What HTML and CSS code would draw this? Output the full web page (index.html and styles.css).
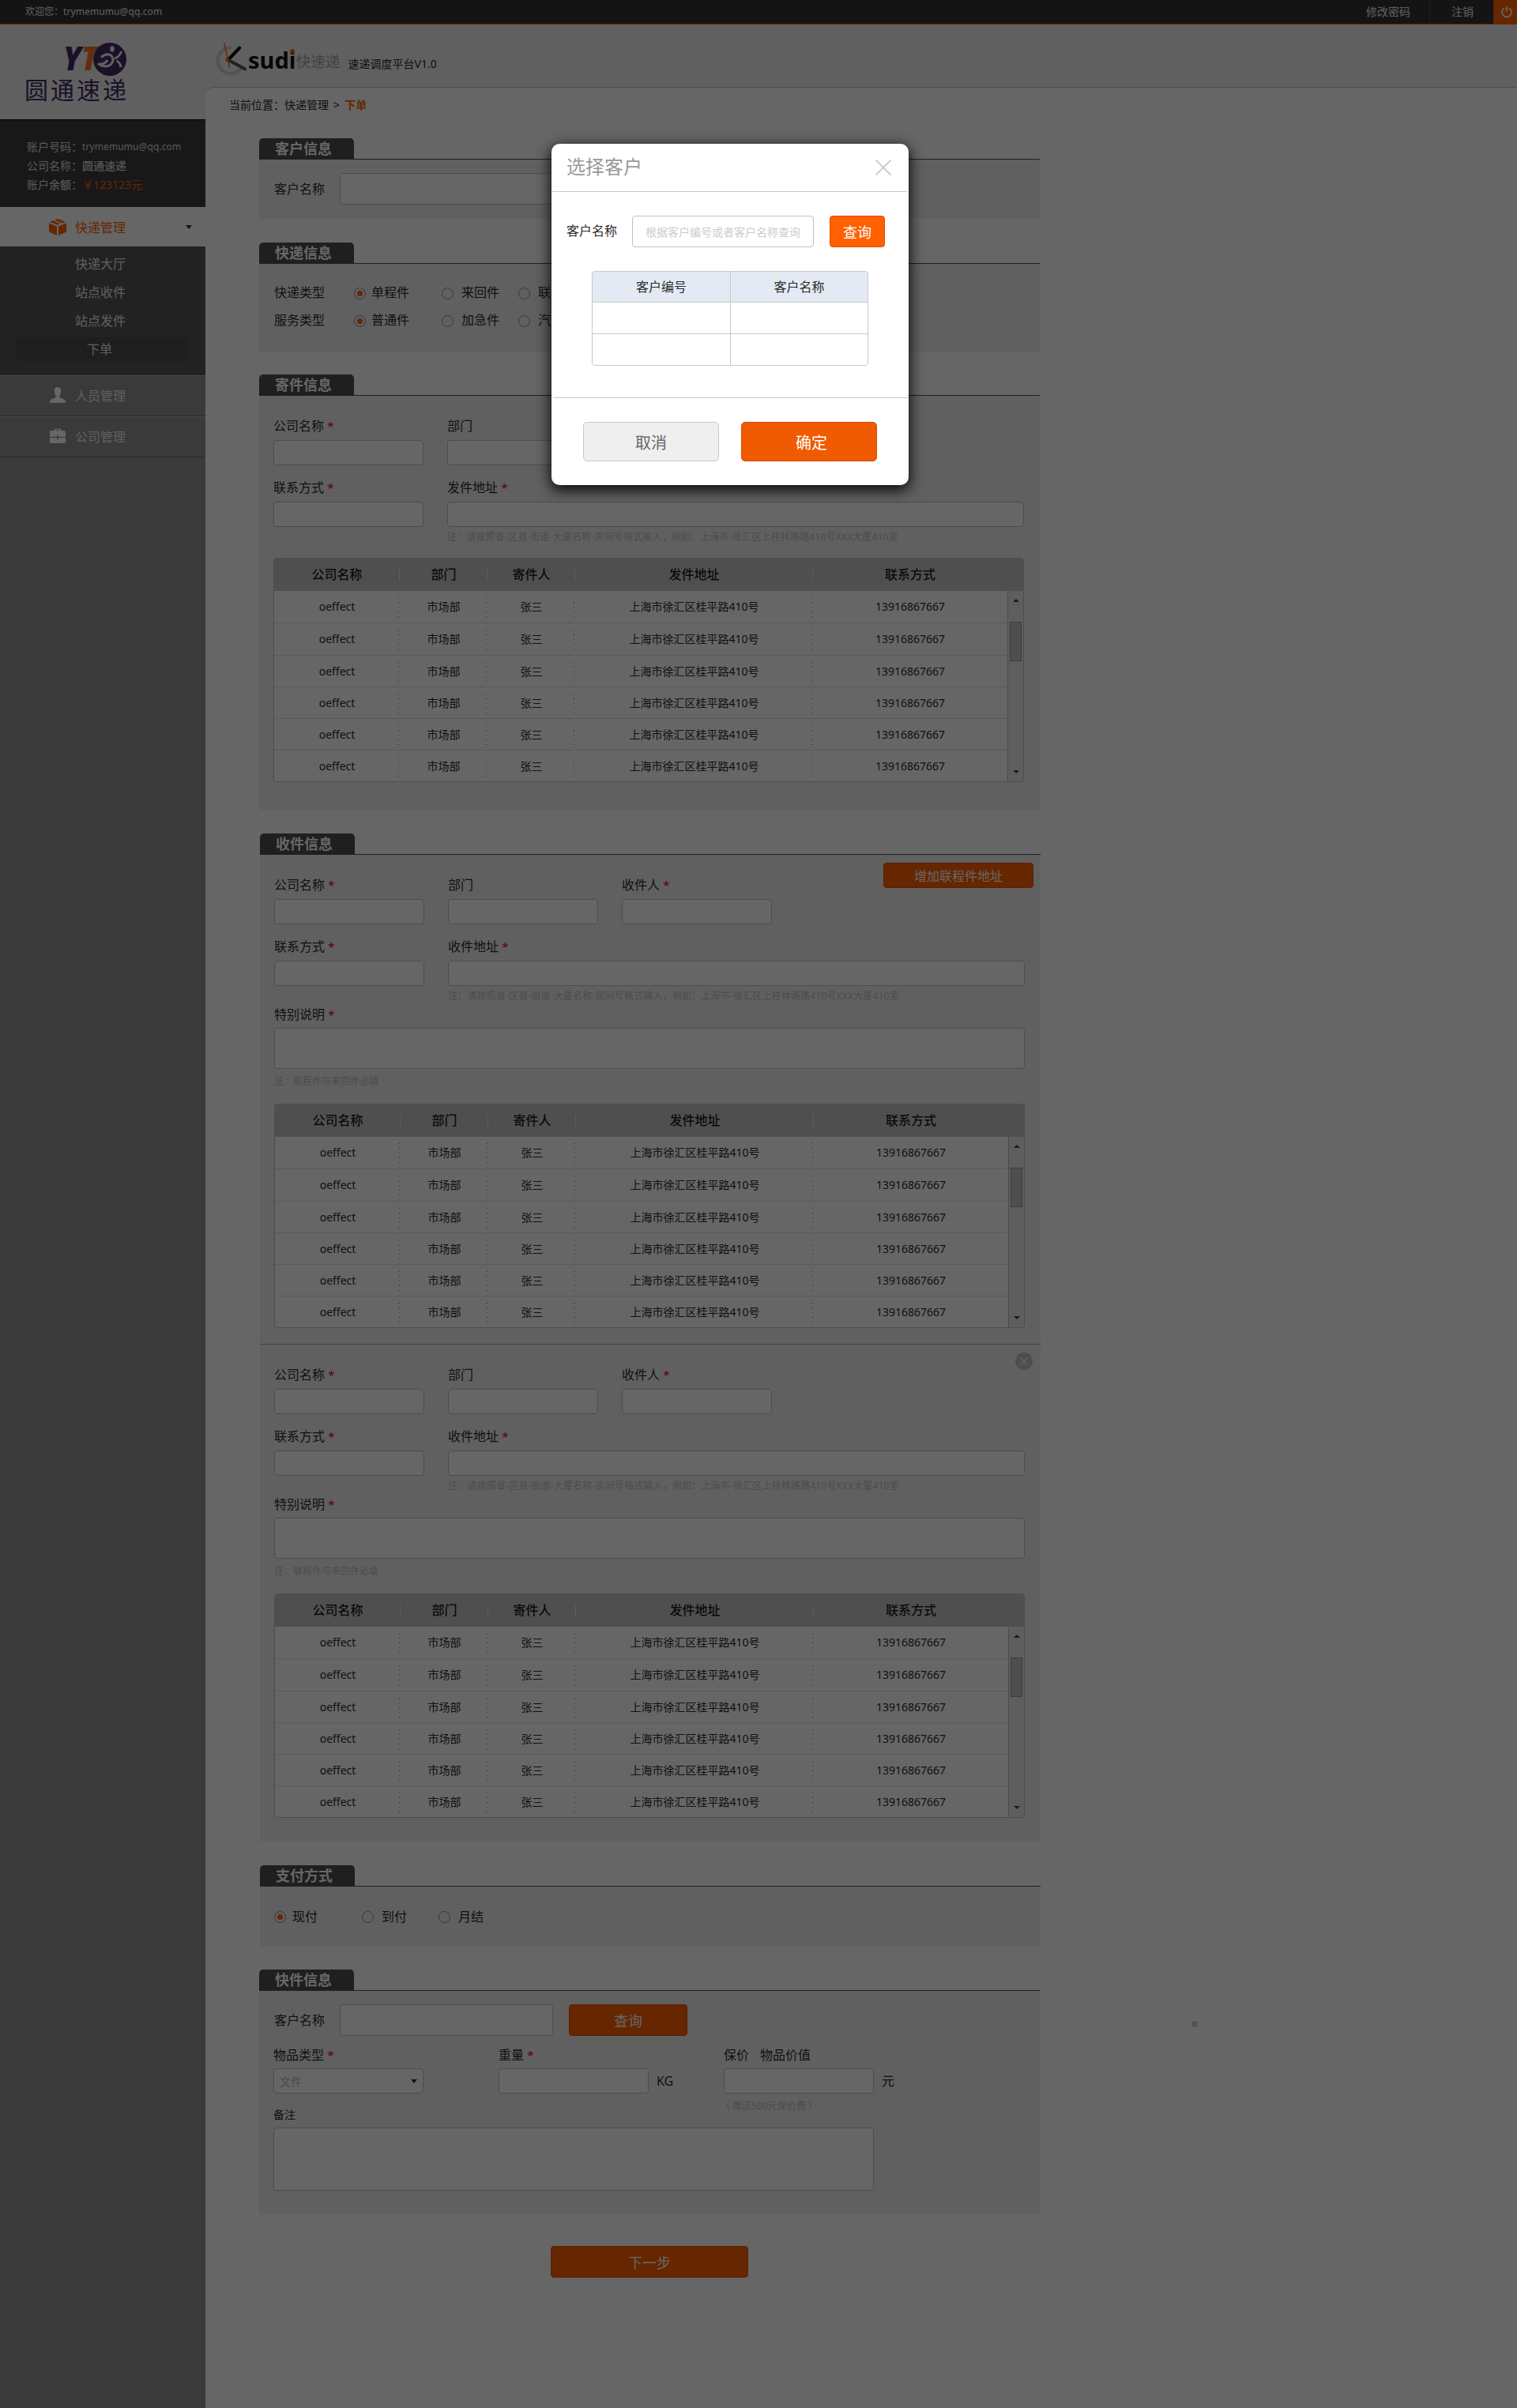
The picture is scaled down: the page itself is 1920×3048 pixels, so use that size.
FILE: index.html
```html
<!DOCTYPE html>
<html lang="zh-CN">
<head>
<meta charset="utf-8">
<title>速递调度平台V1.0</title>
<link rel="stylesheet" href="styles.css">
</head>
<body>
<div class="page">
  <header class="topbar">
    <div class="welcome"><span>欢迎您<span class="pt">：</span></span><span class="mail">trymemumu@qq.com</span></div>
    <nav class="topnav">
      <a class="topnav-link">修改密码</a>
      <a class="topnav-link logout">注销</a>
      <a class="power"><svg width="16" height="16" viewBox="0 0 16 16"><path d="M5.2 3.2A6 6 0 1 0 10.8 3.2M8 .8v7" fill="none" stroke="#fff" stroke-width="1.8"/></svg></a>
    </nav>
  </header>

  <div class="layout">
    <aside class="sidebar">
      <div class="company-logo">
        <svg class="yto" width="90" height="44" viewBox="0 0 90 44">
          <text class="yto-text" x="5" y="36" textLength="44" lengthAdjust="spacingAndGlyphs">Y<tspan fill="#f2702a">T</tspan></text>
          <circle cx="64" cy="22" r="21" fill="#432b64"/>
          <ellipse cx="67" cy="9" rx="2.800" ry="3.700" fill="#f0f0f0"/>
          <path d="M53 19.500Q60 13.500 66 17.500Q71 24 64 29.500Q58 33 49 28Q58 29 61 23" fill="none" stroke="#f0f0f0" stroke-width="3"/>
          <path d="M78.500 12Q77 18 70 21.500M72.500 24Q77 26 78 32" fill="none" stroke="#f0f0f0" stroke-width="3"/>
        </svg>
        <div class="company-name">圆通速递</div>
      </div>
      <div class="account">
        <div class="account-row"><span>账户号码<span class="pt">：</span></span><span class="mail">trymemumu@qq.com</span></div>
        <div class="account-row"><span>公司名称<span class="pt">：</span></span><b>圆通速递</b></div>
        <div class="account-row"><span>账户<b>余额</b><span class="pt">：</span></span><span class="balance">￥123123元</span></div>
      </div>
      <div class="menu-item active">
        <svg width="22" height="21" viewBox="0 0 22 21"><path d="M0 5.5L10 9.500V21L0 16.500zM22 5.500L12 9.500V21L22 16.500zM1 4L5 2.300L14 6L11 7.800zM7 1.500L11 0L21 4L16.500 5.500z" fill="#ff5f00"/></svg>
        <span>快递管理</span>
        <i class="caret"></i>
      </div>
      <ul class="submenu">
        <li>快递大厅</li>
        <li>站点收件</li>
        <li>站点发件</li>
        <li class="current">下单</li>
      </ul>
      <div class="menu-item">
        <svg width="22" height="20" viewBox="0 0 22 20"><path d="M11 0c3 0 4.300 2.300 4.300 5.300c0 3-1.600 4.600-2 6.700c0 2.500 7 2.300 7.700 5.500V20H1v-2.500c.7-3.200 7.700-3 7.700-5.500C8.300 9.900 6.700 8.300 6.700 5.300C6.700 2.300 8 0 11 0z" fill="#fff"/></svg>
        <span>人员管理</span>
      </div>
      <div class="menu-item">
        <svg width="22" height="20" viewBox="0 0 22 20"><path d="M7 3V.8h8V3h4q2 0 2 2v6H12V9.500h-2V11H1V5q0-2 2-2zM9 3h4V2H9zM1 12h9v2h2v-2h9v6q0 1-1 1H2q-1 0-1-1z" fill="#fff"/></svg>
        <span>公司管理</span>
      </div>
    </aside>

    <main class="main">
      <div class="brand">
        <svg width="46" height="46" viewBox="0 0 46 46">
          <path d="M22.500 7.200A16.400 16.400 0 1 0 36 33.500" fill="none" stroke="#cfcfcf" stroke-width="4.500" stroke-linecap="round"/>
          <path d="M20 22.500L34.300 7.500" stroke="#111" stroke-width="4" stroke-linecap="round"/>
          <path d="M20 23L41 34.300" stroke="#555" stroke-width="4" stroke-linecap="round"/>
          <path d="M14.700 1.300L21.700 32.700" stroke="#ff5f00" stroke-width="1.500"/>
          <circle cx="19" cy="22.700" r="2.500" fill="#ff5f00"/>
        </svg>
        <span class="brand-latin">sudi</span>
        <span class="brand-cn">快速递</span>
        <span class="brand-sub">速递调度平台V1.0</span>
      </div>
      <div class="content">
        <div class="crumb">当前位置<span class="pt">：</span>快递管理 <span class="gt">&gt;</span> <b>下单</b></div>

        <section class="section customer">
          <div class="section-head"><h2>客户信息</h2></div>
          <div class="panel query">
            <label>客户名称</label><input type="text"><button class="btn">查询</button>
          </div>
        </section>

        <section class="section express">
          <div class="section-head"><h2>快递信息</h2></div>
          <div class="panel radios">
            <div class="radio-row"><span>快递类型</span><i class="radio on"></i><span>单程件</span><i class="radio"></i><span>来回件</span><i class="radio"></i><span>联程件</span></div>
            <div class="radio-row"><span>服务类型</span><i class="radio on"></i><span>普通件</span><i class="radio"></i><span>加急件</span><i class="radio"></i><span>汽运件</span></div>
          </div>
        </section>

        <section class="section sender">
          <div class="section-head"><h2>寄件信息</h2></div>
          <div class="panel form">
            <div class="fields">
              <div class="field"><label>公司名称 <em>*</em></label><input type="text"></div>
              <div class="field"><label>部门</label><input type="text"></div>
              <div class="field"><label>寄件人 <em>*</em></label><input type="text"></div>
            </div>
            <div class="fields">
              <div class="field"><label>联系方式 <em>*</em></label><input type="text"></div>
              <div class="field wide"><label>发件地址 <em>*</em></label><input type="text"><p class="note">注<span class="pt">：</span>请按照省-区县-街道-大厦名称-房间号格式输入<span class="pt">，</span>例如<span class="pt">：</span>上海市-徐汇区上桂林路路410号XXX大厦410室</p></div>
            </div>
            <div class="grid">
              <div class="grid-head"><span>公司名称</span><span>部门</span><span>寄件人</span><span>发件地址</span><span>联系方式</span></div>
              <div class="grid-body">
                <div class="rows">
                  <div class="row"><span>oeffect</span><span>市场部</span><span>张三</span><span>上海市徐汇区桂平路410号</span><span>13916867667</span></div>
                  <div class="row"><span>oeffect</span><span>市场部</span><span>张三</span><span>上海市徐汇区桂平路410号</span><span>13916867667</span></div>
                  <div class="row"><span>oeffect</span><span>市场部</span><span>张三</span><span>上海市徐汇区桂平路410号</span><span>13916867667</span></div>
                  <div class="row"><span>oeffect</span><span>市场部</span><span>张三</span><span>上海市徐汇区桂平路410号</span><span>13916867667</span></div>
                  <div class="row"><span>oeffect</span><span>市场部</span><span>张三</span><span>上海市徐汇区桂平路410号</span><span>13916867667</span></div>
                  <div class="row"><span>oeffect</span><span>市场部</span><span>张三</span><span>上海市徐汇区桂平路410号</span><span>13916867667</span></div>
                </div>
                <div class="scroll"><i class="up"></i><i class="thumb"></i><i class="down"></i></div>
              </div>
            </div>
          </div>
        </section>

        <section class="section receiver shifted">
          <div class="section-head"><h2>收件信息</h2></div>
          <div class="panel form">
            <button class="btn add">增加联程件地址</button>
            <div class="fields">
              <div class="field"><label>公司名称 <em>*</em></label><input type="text"></div>
              <div class="field"><label>部门</label><input type="text"></div>
              <div class="field"><label>收件人 <em>*</em></label><input type="text"></div>
            </div>
            <div class="fields">
              <div class="field"><label>联系方式 <em>*</em></label><input type="text"></div>
              <div class="field wide"><label>收件地址 <em>*</em></label><input type="text"><p class="note">注<span class="pt">：</span>请按照省-区县-街道-大厦名称-房间号格式输入<span class="pt">，</span>例如<span class="pt">：</span>上海市-徐汇区上桂林路路410号XXX大厦410室</p></div>
            </div>
            <div class="field remark"><label>特别说明 <em>*</em></label><textarea></textarea><p class="note">注<span class="pt">：</span>联程件与来回件必填</p></div>
            <div class="grid">
              <div class="grid-head"><span>公司名称</span><span>部门</span><span>寄件人</span><span>发件地址</span><span>联系方式</span></div>
              <div class="grid-body">
                <div class="rows">
                  <div class="row"><span>oeffect</span><span>市场部</span><span>张三</span><span>上海市徐汇区桂平路410号</span><span>13916867667</span></div>
                  <div class="row"><span>oeffect</span><span>市场部</span><span>张三</span><span>上海市徐汇区桂平路410号</span><span>13916867667</span></div>
                  <div class="row"><span>oeffect</span><span>市场部</span><span>张三</span><span>上海市徐汇区桂平路410号</span><span>13916867667</span></div>
                  <div class="row"><span>oeffect</span><span>市场部</span><span>张三</span><span>上海市徐汇区桂平路410号</span><span>13916867667</span></div>
                  <div class="row"><span>oeffect</span><span>市场部</span><span>张三</span><span>上海市徐汇区桂平路410号</span><span>13916867667</span></div>
                  <div class="row"><span>oeffect</span><span>市场部</span><span>张三</span><span>上海市徐汇区桂平路410号</span><span>13916867667</span></div>
                </div>
                <div class="scroll"><i class="up"></i><i class="thumb"></i><i class="down"></i></div>
              </div>
            </div>
          </div>
          <div class="panel form extra">
            <svg class="remove" width="22" height="22" viewBox="0 0 22 22"><circle cx="11" cy="11" r="11" fill="#c4c4c4"/><path d="M6.500 6.500l9 9M15.500 6.500l-9 9" stroke="#f0f0f0" stroke-width="1.500"/></svg>
            <div class="fields">
              <div class="field"><label>公司名称 <em>*</em></label><input type="text"></div>
              <div class="field"><label>部门</label><input type="text"></div>
              <div class="field"><label>收件人 <em>*</em></label><input type="text"></div>
            </div>
            <div class="fields">
              <div class="field"><label>联系方式 <em>*</em></label><input type="text"></div>
              <div class="field wide"><label>收件地址 <em>*</em></label><input type="text"><p class="note">注<span class="pt">：</span>请按照省-区县-街道-大厦名称-房间号格式输入<span class="pt">，</span>例如<span class="pt">：</span>上海市-徐汇区上桂林路路410号XXX大厦410室</p></div>
            </div>
            <div class="field remark"><label>特别说明 <em>*</em></label><textarea></textarea><p class="note">注<span class="pt">：</span>联程件与来回件必填</p></div>
            <div class="grid">
              <div class="grid-head"><span>公司名称</span><span>部门</span><span>寄件人</span><span>发件地址</span><span>联系方式</span></div>
              <div class="grid-body">
                <div class="rows">
                  <div class="row"><span>oeffect</span><span>市场部</span><span>张三</span><span>上海市徐汇区桂平路410号</span><span>13916867667</span></div>
                  <div class="row"><span>oeffect</span><span>市场部</span><span>张三</span><span>上海市徐汇区桂平路410号</span><span>13916867667</span></div>
                  <div class="row"><span>oeffect</span><span>市场部</span><span>张三</span><span>上海市徐汇区桂平路410号</span><span>13916867667</span></div>
                  <div class="row"><span>oeffect</span><span>市场部</span><span>张三</span><span>上海市徐汇区桂平路410号</span><span>13916867667</span></div>
                  <div class="row"><span>oeffect</span><span>市场部</span><span>张三</span><span>上海市徐汇区桂平路410号</span><span>13916867667</span></div>
                  <div class="row"><span>oeffect</span><span>市场部</span><span>张三</span><span>上海市徐汇区桂平路410号</span><span>13916867667</span></div>
                </div>
                <div class="scroll"><i class="up"></i><i class="thumb"></i><i class="down"></i></div>
              </div>
            </div>
          </div>
        </section>

        <section class="section payment shifted">
          <div class="section-head"><h2>支付方式</h2></div>
          <div class="panel pay">
            <i class="radio on"></i><span>现付</span><i class="radio"></i><span>到付</span><i class="radio"></i><span>月结</span>
          </div>
        </section>

        <section class="section parcel">
          <div class="section-head"><h2>快件信息</h2></div>
          <div class="panel parcel-panel">
            <div class="query">
              <label>客户名称</label><input type="text"><button class="btn">查询</button>
            </div>
            <div class="parcel-fields">
              <div class="field"><label>物品类型 <em>*</em></label><div class="select"><span>文件</span><i class="caret"></i></div></div>
              <div class="field"><label>重量 <em>*</em></label><div class="unit"><input type="text"><span>KG</span></div></div>
              <div class="field"><label><span class="insure">保价</span>物品价值</label><div class="unit"><input type="text"><span>元</span></div><p class="note">（ 赠送500元保价费 ）</p></div>
            </div>
            <div class="memo"><label>备注</label><textarea></textarea></div>
          </div>
        </section>

        <button class="btn next">下一步</button>
      </div>
    </main>
  </div>

  <i class="marker"></i>
  <div class="mask"></div>
  <div class="dialog">
    <div class="dialog-head">
      <h3>选择客户</h3>
      <svg width="20" height="20" viewBox="0 0 20 20"><path d="M.5 .5l19 19M19.500 .5l-19 19" stroke="#c8c8c8" stroke-width="1.800"/></svg>
    </div>
    <div class="dialog-body">
      <div class="search">
        <label>客户名称</label>
        <input type="text" placeholder="根据客户编号或者客户名称查询">
        <button class="btn">查询</button>
      </div>
      <div class="result">
        <span class="th">客户编号</span><span class="th">客户名称</span>
        <span></span><span></span>
        <span></span><span></span>
      </div>
    </div>
    <div class="dialog-foot">
      <button class="cancel">取消</button>
      <button class="confirm">确定</button>
    </div>
  </div>
</div>
</body>
</html>
```
FILE: styles.css
```css
* { box-sizing: border-box; margin: 0; padding: 0; }
body, input, button, textarea { font-family: "Noto Sans", "Noto Sans CJK SC", sans-serif; }
body { font-size: 16px; color: #2a2a2a; background: #fff; }
em, i { font-style: normal; }
input, textarea { display: block; border: 1px solid #c0c0c0; border-radius: 4px; background: #fff; resize: none; outline: none; }
.page { position: relative; width: 1920px; height: 3048px; display: flex; flex-direction: column; overflow: hidden; }
/* centred full-width punctuation */
.pt { font-family: "Noto Sans CJK TC", sans-serif; line-height: 1; }

/* top bar */
.topbar { height: 31px; display: flex; justify-content: space-between; background: #323232; border-bottom: 1px solid #ff5f00; color: #eee; }
.welcome { padding-left: 32px; font-size: 12px; line-height: 30px; display: flex; }
.mail { font-size: 12px; letter-spacing: .1px; }
.topnav { display: flex; font-size: 14px; line-height: 30px; height: 31px; }
.topnav-link { padding: 0 0 0 25px; width: 105px; }
.topnav-link.logout { width: 81px; padding: 0 0 0 27px; border-left: 1px solid #4b4b4b; }
.power { width: 30px; background: #ff5f00; padding: 7px 0 0 9px; line-height: 0; }

.layout { flex: 1; display: flex; }

/* sidebar */
.sidebar { width: 260px; background: #919191; }
.company-logo { height: 121px; padding-top: 22px; background: #f0f0f0; border-bottom: 1px solid #000; }
.yto { display: block; margin-left: 75px; overflow: visible; }
.yto-text { font: italic 800 42px "Open Sans", sans-serif; fill: #432b64; }
.company-name { margin: -3px 0 0 31px; font-size: 30px; line-height: 40px; letter-spacing: 3px; color: #432b64; }
.account { height: 110px; padding: 22px 0 0 34px; background: #3c3c3c; color: #ddd; font-size: 14px; line-height: 24px; }
.account-row { display: flex; height: 24px; }
.account b { font-weight: 500; }
.balance { color: #ff5f00; }
.menu-item { height: 52px; display: flex; align-items: center; gap: 11px; padding: 0 0 2px 62px; border-top: 1px solid #bbb; border-bottom: 1px solid #666; color: #eee; }
.menu-item.active { height: 50px; padding-bottom: 0; border: 0; background: #fff; color: #ff5f00; }
.caret { border: 4px solid transparent; border-top: 5px solid #333; border-bottom: 0; }
.menu-item .caret { margin-left: 65px; }
.submenu { list-style: none; height: 163px; padding: 7px 20px 0; background: #555; color: #eee; }
.submenu li { width: 219px; height: 30px; margin-bottom: 6px; padding-left: 75px; line-height: 31px; border-radius: 4px; }
.submenu .current { padding-left: 90px; background: #4d4d4d; }

/* main column */
.main { width: 1660px; display: flex; flex-direction: column; background: #f0f0f0; }
.brand { height: 79px; display: flex; padding: 22px 0 0 9px; }
.brand-latin { position: relative; font: 700 29px/46px "Noto Sans", sans-serif; margin-left: -1px; color: #111; }
.brand-latin::after { content: ""; position: absolute; right: 1px; top: 9px; width: 6px; height: 6px; border-radius: 50%; background: #ff5f00; }
.brand-cn { font-size: 18.700px; line-height: 50px; color: #a5a5a5; }
.brand-sub { font-size: 14px; line-height: 56px; margin-left: 10px; }
.content { flex: 1; padding-left: 68px; border: 1px solid #c0c0c0; border-width: 1px 0 0; border-radius: 10px 0 0 0; background: #fff; }
.crumb { height: 42px; margin-left: -38px; margin-top: 1px; font-size: 14px; line-height: 41px; }
.crumb b { color: #ff5f00; margin-left: 3px; }
.gt { margin: 0 0 0 2px; }

/* sections */
.section { width: 988px; margin-top: 30px; }
.section.customer { margin-top: 21px; }
.section.sender { margin-top: 29px; }
.section.shifted { margin-left: 1px; }
.section-head { height: 27px; border-bottom: 1px solid #505050; }
h2 { width: 120px; height: 26px; border-radius: 5px 5px 0 0; background: #4e4e4e; color: #fff; font-size: 18px; line-height: 27px; text-indent: 20px; font-weight: 700; }
.panel { position: relative; background: #f0f0f0; }
.query { display: flex; align-items: center; padding: 17px 19px 18px; }
.query label { width: 83px; line-height: 40px; }
.query input { width: 270px; height: 40px; }
.query .btn { width: 150px; height: 40px; margin-left: 20px; }
.btn { border: 1px solid #e04c00; border-radius: 4px; background: #ff6000; color: #fff; font-size: 18px; }

.radios { height: 111px; padding-top: 20px; }
.radio-row { display: flex; align-items: center; height: 35px; padding-left: 19px; line-height: 33px; }
.radio-row span { height: 35px; }
.radio { width: 15px; height: 15px; border: 1px solid #8c8c8c; border-radius: 50%; display: flex; }
.radio.on::after { content: ""; width: 7px; height: 7px; margin: auto; border-radius: 50%; background: #ff5f00; }
.radio-row span:first-child { width: 101px; }
.radio-row .radio + span { width: 89px; margin-left: 7px; }
.radio-row .radio + span + .radio + span { width: 72px; margin-left: 10px; }

/* forms */
.form { padding: 26px 20px 0 18px; height: 524px; }
.fields { display: flex; gap: 30px; margin-bottom: 16px; }
.field { width: 190px; }
.field label { display: block; height: 24px; line-height: 24px; margin-bottom: 6px; }
.field input { width: 190px; height: 32px; }
.field.wide, .field.wide input { width: 730px; }
em { color: #e00000; font-size: 15px; line-height: 1; }
.note { margin-top: 4px; font-size: 12px; line-height: 18px; color: #bebebe; white-space: nowrap; }
.field.wide .note { letter-spacing: .17px; }
.receiver .fields + .fields { margin-bottom: 2px; }
.field.remark { width: 950px; }
.field.remark label { margin-bottom: 5px; }
.field.remark textarea { width: 950px; height: 52px; }
.field.remark .note { margin-top: 7px; margin-bottom: 19px; }
.receiver .form { height: 619px; }
.receiver .form.extra { height: 630px; border-top: 1px solid #a8a8a8; }
.add { position: absolute; top: 10px; right: 9px; width: 190px; height: 32px; font-size: 16px; }
.remove { position: absolute; top: 10px; right: 10px; }

.grid { width: 950px; height: 284px; border: 1px solid #c0c0c0; border-radius: 4px; background: #fff; overflow: hidden; }
.sender .grid { margin-top: 17px; }
.sender .fields + .fields { margin-bottom: 0; }
.grid-head, .row { display: grid; grid-template-columns: 159px 111px 111px 301px 246px; text-align: center; }
.grid-head { height: 41px; line-height: 41px; background: #c6c6c6; color: #1a1a1a; }
.grid-head span { font-weight: 500; }
.grid-head span:not(:last-child) { background: linear-gradient(#e8e8e8, #e8e8e8) right 0 top 13px / 1px 15px no-repeat; }
.grid-body { display: flex; height: 241px; }
.rows { width: 928px; }
.row { height: 40px; font-size: 14px; line-height: 39px; border-bottom: 1px solid #e0e0e0; }
.row:nth-child(-n+2) { height: 41px; }
.row:last-child { border-bottom: 0; height: 39px; }
.row span { height: 39px; }
.row span:not(:last-child) { background: repeating-linear-gradient(#777 0 1px, transparent 1px 6px) right 1px top 8px / 1px 25px no-repeat; }
.scroll { width: 20px; height: 241px; border-left: 1px solid #b8b8b8; background: #ebebeb; display: flex; flex-direction: column; align-items: center; }
.up { margin-top: 10px; border: 4px solid transparent; border-top: 0; border-bottom: 4px solid #444; }
.down { margin-top: auto; margin-bottom: 10px; border: 4px solid transparent; border-bottom: 0; border-top: 4px solid #444; }
.thumb { margin-top: 25px; width: 15px; height: 50px; border: 1px solid #999; background: #c6c6c6; }

.pay { height: 75px; display: flex; padding: 31px 0 0 18px; line-height: 15px; }
.pay span { width: 88px; margin-left: 8px; }
.pay .radio ~ .radio + span { width: 72px; margin-left: 10px; }

/* parcel */
.parcel-panel { height: 283px; }
.parcel-panel .query { padding-bottom: 0; }
.parcel-fields { display: flex; gap: 95px; padding: 12px 0 0 18px; }
.parcel-fields label { margin-bottom: 5px; }
.unit { display: flex; gap: 10px; height: 32px; line-height: 33px; white-space: nowrap; }
.unit input { flex: none; }
.insure { margin-right: 14px; }
.parcel-fields .note { margin-top: 7px; margin-left: -4px; }
.select { width: 190px; height: 32px; padding: 0 7px; display: flex; justify-content: space-between; align-items: center; border: 1px solid #c0c0c0; border-radius: 4px; background: #fff; font-size: 14px; color: #bbb; }
.memo { padding-left: 18px; margin-top: -8px; }
.memo label { display: block; font-size: 14px; line-height: 20px; margin-bottom: 6px; }
.memo textarea { width: 760px; height: 80px; }
.next { display: block; width: 250px; height: 40px; margin: 40px 0 0 369px; }
.marker { position: absolute; left: 1508px; top: 2558px; width: 8px; height: 8px; border-radius: 50%; border: 1px solid #bbb; background: #d4d4d4; }

/* dialog */
.mask { position: absolute; inset: 0; background: rgba(0, 0, 0, .6); }
.dialog { position: absolute; left: 698px; top: 182px; width: 452px; height: 432px; border-radius: 10px; background: #fff; box-shadow: 0 5px 18px 1px rgba(0, 0, 0, .95); display: flex; flex-direction: column; }
.dialog-head { height: 61px; width: 450px; padding: 0 20px 0 19px; display: flex; align-items: center; justify-content: space-between; border-bottom: 1px solid #c8c8c8; }
h3 { font-size: 24px; line-height: 30px; padding-bottom: 3px; font-weight: 400; color: #999; }
.dialog-body { height: 261px; padding-top: 30px; margin-left: 2px; border-bottom: 1px solid #c8c8c8; }
.search { display: flex; align-items: center; padding-left: 17px; }
.search label { width: 83px; line-height: 38px; height: 40px; }
.search input { width: 230px; height: 40px; padding: 0 16px; font-size: 14px; }
.search input::placeholder { color: #ccc; opacity: 1; }
.search .btn { width: 70px; height: 40px; margin-left: 20px; }
.result { width: 350px; height: 120px; margin: 30px 0 0 49px; display: grid; grid-template: 38px 39px 39px / 174px 173px; gap: 1px; border: 1px solid #c8c8c8; border-radius: 4px; background: #c8c8c8; overflow: hidden; }
.result span { background: #fff; }
.result .th { background: #e4eaf3; text-align: center; line-height: 38px; }
.dialog-foot { display: flex; gap: 28px; padding: 30px 0 0 40px; }
.dialog-foot button { width: 172px; height: 50px; font-size: 20px; border-radius: 5px; }
.cancel { background: #efefef; border: 1px solid #c8c8c8; color: #666; }
.dialog-foot .confirm { padding-left: 6px; background: #f05a00; border: 1px solid #d94e00; color: #fff; }
```
